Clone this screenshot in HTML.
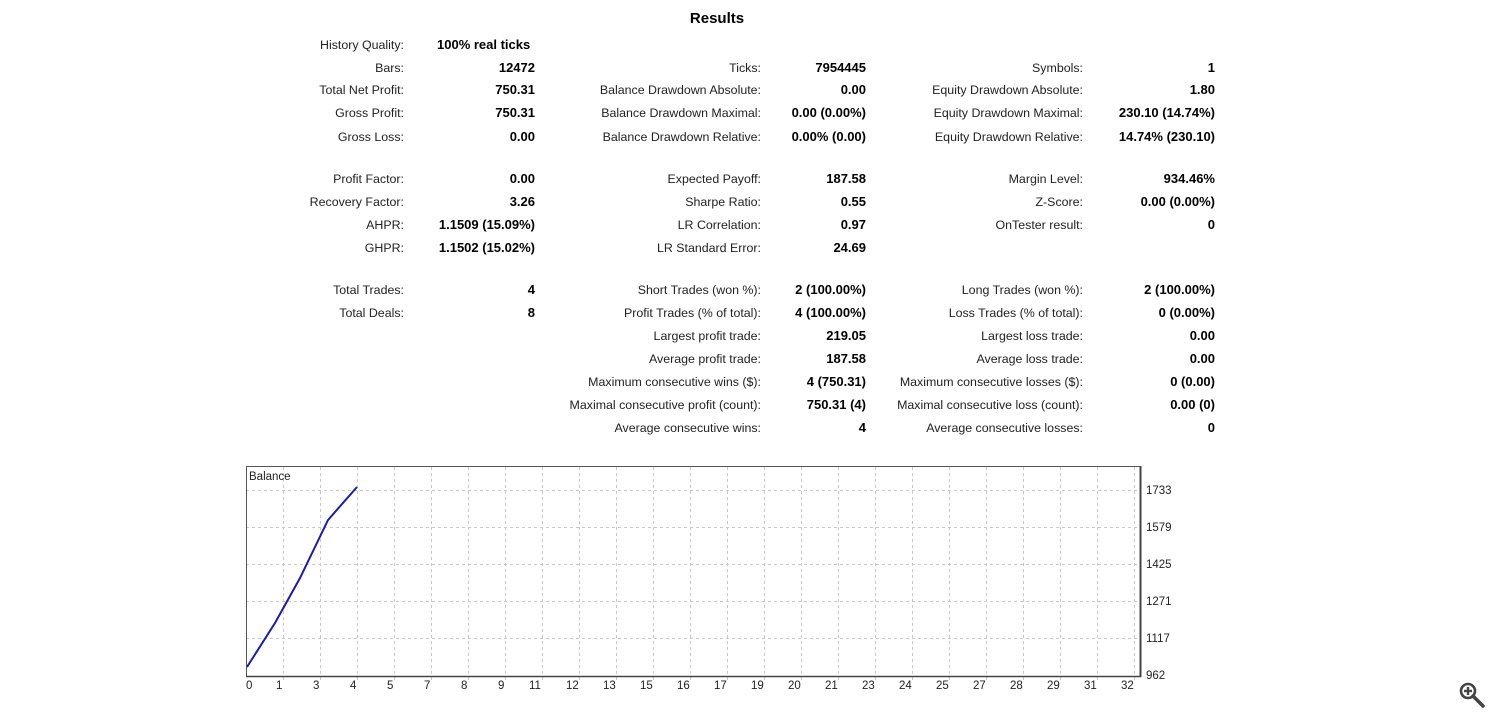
<!DOCTYPE html>
<html><head><meta charset="utf-8"><style>
body{margin:0;width:1500px;height:721px;background:#fff;position:relative;overflow:hidden;font-family:"Liberation Sans",Tahoma,sans-serif;font-size:12.4px;color:#222}
.c{position:absolute;white-space:nowrap;line-height:16px}
.b{font-weight:bold;color:#000;font-size:13px}
.t{position:absolute;left:0;width:1434px;text-align:center;top:10px;font-weight:bold;font-size:15px;color:#000}
.ax{position:absolute;font-size:11.5px;line-height:12px;color:#222}
</style></head><body>
<div class="t">Results</div>
<div class="c" style="right:1096px;top:37px">History Quality:</div><div class="c b" style="left:437px;top:37px">100% real ticks</div>

<div class="c" style="right:1096px;top:60px">Bars:</div><div class="c b" style="right:965px;top:60px">12472</div>
<div class="c" style="right:739px;top:60px">Ticks:</div><div class="c b" style="right:634px;top:60px">7954445</div>
<div class="c" style="right:417px;top:60px">Symbols:</div><div class="c b" style="right:285px;top:60px">1</div>

<div class="c" style="right:1096px;top:82px">Total Net Profit:</div><div class="c b" style="right:965px;top:82px">750.31</div>
<div class="c" style="right:739px;top:82px">Balance Drawdown Absolute:</div><div class="c b" style="right:634px;top:82px">0.00</div>
<div class="c" style="right:417px;top:82px">Equity Drawdown Absolute:</div><div class="c b" style="right:285px;top:82px">1.80</div>

<div class="c" style="right:1096px;top:105px">Gross Profit:</div><div class="c b" style="right:965px;top:105px">750.31</div>
<div class="c" style="right:739px;top:105px">Balance Drawdown Maximal:</div><div class="c b" style="right:634px;top:105px">0.00 (0.00%)</div>
<div class="c" style="right:417px;top:105px">Equity Drawdown Maximal:</div><div class="c b" style="right:285px;top:105px">230.10 (14.74%)</div>

<div class="c" style="right:1096px;top:129px">Gross Loss:</div><div class="c b" style="right:965px;top:129px">0.00</div>
<div class="c" style="right:739px;top:129px">Balance Drawdown Relative:</div><div class="c b" style="right:634px;top:129px">0.00% (0.00)</div>
<div class="c" style="right:417px;top:129px">Equity Drawdown Relative:</div><div class="c b" style="right:285px;top:129px">14.74% (230.10)</div>

<div class="c" style="right:1096px;top:171px">Profit Factor:</div><div class="c b" style="right:965px;top:171px">0.00</div>
<div class="c" style="right:739px;top:171px">Expected Payoff:</div><div class="c b" style="right:634px;top:171px">187.58</div>
<div class="c" style="right:417px;top:171px">Margin Level:</div><div class="c b" style="right:285px;top:171px">934.46%</div>

<div class="c" style="right:1096px;top:194px">Recovery Factor:</div><div class="c b" style="right:965px;top:194px">3.26</div>
<div class="c" style="right:739px;top:194px">Sharpe Ratio:</div><div class="c b" style="right:634px;top:194px">0.55</div>
<div class="c" style="right:417px;top:194px">Z-Score:</div><div class="c b" style="right:285px;top:194px">0.00 (0.00%)</div>

<div class="c" style="right:1096px;top:217px">AHPR:</div><div class="c b" style="right:965px;top:217px">1.1509 (15.09%)</div>
<div class="c" style="right:739px;top:217px">LR Correlation:</div><div class="c b" style="right:634px;top:217px">0.97</div>
<div class="c" style="right:417px;top:217px">OnTester result:</div><div class="c b" style="right:285px;top:217px">0</div>

<div class="c" style="right:1096px;top:240px">GHPR:</div><div class="c b" style="right:965px;top:240px">1.1502 (15.02%)</div>
<div class="c" style="right:739px;top:240px">LR Standard Error:</div><div class="c b" style="right:634px;top:240px">24.69</div>

<div class="c" style="right:1096px;top:282px">Total Trades:</div><div class="c b" style="right:965px;top:282px">4</div>
<div class="c" style="right:739px;top:282px">Short Trades (won %):</div><div class="c b" style="right:634px;top:282px">2 (100.00%)</div>
<div class="c" style="right:417px;top:282px">Long Trades (won %):</div><div class="c b" style="right:285px;top:282px">2 (100.00%)</div>

<div class="c" style="right:1096px;top:305px">Total Deals:</div><div class="c b" style="right:965px;top:305px">8</div>
<div class="c" style="right:739px;top:305px">Profit Trades (% of total):</div><div class="c b" style="right:634px;top:305px">4 (100.00%)</div>
<div class="c" style="right:417px;top:305px">Loss Trades (% of total):</div><div class="c b" style="right:285px;top:305px">0 (0.00%)</div>

<div class="c" style="right:739px;top:328px">Largest profit trade:</div><div class="c b" style="right:634px;top:328px">219.05</div>
<div class="c" style="right:417px;top:328px">Largest loss trade:</div><div class="c b" style="right:285px;top:328px">0.00</div>

<div class="c" style="right:739px;top:351px">Average profit trade:</div><div class="c b" style="right:634px;top:351px">187.58</div>
<div class="c" style="right:417px;top:351px">Average loss trade:</div><div class="c b" style="right:285px;top:351px">0.00</div>

<div class="c" style="right:739px;top:374px">Maximum consecutive wins ($):</div><div class="c b" style="right:634px;top:374px">4 (750.31)</div>
<div class="c" style="right:417px;top:374px">Maximum consecutive losses ($):</div><div class="c b" style="right:285px;top:374px">0 (0.00)</div>

<div class="c" style="right:739px;top:397px">Maximal consecutive profit (count):</div><div class="c b" style="right:634px;top:397px">750.31 (4)</div>
<div class="c" style="right:417px;top:397px">Maximal consecutive loss (count):</div><div class="c b" style="right:285px;top:397px">0.00 (0)</div>

<div class="c" style="right:739px;top:420px">Average consecutive wins:</div><div class="c b" style="right:634px;top:420px">4</div>
<div class="c" style="right:417px;top:420px">Average consecutive losses:</div><div class="c b" style="right:285px;top:420px">0</div>

<svg style="position:absolute;left:0;top:0" width="1500" height="721">
<g stroke="#c8c8c8" stroke-width="1" stroke-dasharray="3,3">
<line x1="246" y1="490.5" x2="1141" y2="490.5"/><line x1="246" y1="527.5" x2="1141" y2="527.5"/><line x1="246" y1="564.5" x2="1141" y2="564.5"/><line x1="246" y1="601.5" x2="1141" y2="601.5"/><line x1="246" y1="638.5" x2="1141" y2="638.5"/>
<line x1="283.5" y1="467" x2="283.5" y2="680"/><line x1="320.5" y1="467" x2="320.5" y2="680"/><line x1="357.5" y1="467" x2="357.5" y2="680"/><line x1="394.5" y1="467" x2="394.5" y2="680"/><line x1="431.5" y1="467" x2="431.5" y2="680"/><line x1="468.5" y1="467" x2="468.5" y2="680"/><line x1="505.5" y1="467" x2="505.5" y2="680"/><line x1="542.5" y1="467" x2="542.5" y2="680"/><line x1="579.5" y1="467" x2="579.5" y2="680"/><line x1="616.5" y1="467" x2="616.5" y2="680"/><line x1="653.5" y1="467" x2="653.5" y2="680"/><line x1="690.5" y1="467" x2="690.5" y2="680"/><line x1="727.5" y1="467" x2="727.5" y2="680"/><line x1="764.5" y1="467" x2="764.5" y2="680"/><line x1="801.5" y1="467" x2="801.5" y2="680"/><line x1="838.5" y1="467" x2="838.5" y2="680"/><line x1="875.5" y1="467" x2="875.5" y2="680"/><line x1="912.5" y1="467" x2="912.5" y2="680"/><line x1="949.5" y1="467" x2="949.5" y2="680"/><line x1="986.5" y1="467" x2="986.5" y2="680"/><line x1="1023.5" y1="467" x2="1023.5" y2="680"/><line x1="1060.5" y1="467" x2="1060.5" y2="680"/><line x1="1097.5" y1="467" x2="1097.5" y2="680"/><line x1="1134.5" y1="467" x2="1134.5" y2="680"/>
</g>
<rect x="246.5" y="466.5" width="894" height="210" fill="none" stroke="#555" stroke-width="1"/>
<line x1="1140.5" y1="466" x2="1140.5" y2="677" stroke="#444" stroke-width="2"/>
<line x1="246" y1="676.5" x2="1141" y2="676.5" stroke="#444" stroke-width="1.5"/>
<polyline points="247,667 275,623 300,578 328,520 357,487" fill="none" stroke="#1a1ab0" stroke-width="2"/>
<g stroke="#444" fill="none"><circle cx="1468" cy="691" r="7" stroke-width="2.6"/><line x1="1473" y1="696" x2="1483" y2="706" stroke-width="3.5" stroke-linecap="round"/><line x1="1464" y1="691" x2="1472" y2="691" stroke-width="2.4"/><line x1="1468" y1="687" x2="1468" y2="695" stroke-width="2.4"/></g>
</svg>
<div class="ax" style="left:249px;top:471px">Balance</div>
<div class="ax" style="left:1146px;top:485px">1733</div>
<div class="ax" style="left:1146px;top:522px">1579</div>
<div class="ax" style="left:1146px;top:559px">1425</div>
<div class="ax" style="left:1146px;top:596px">1271</div>
<div class="ax" style="left:1146px;top:633px">1117</div>
<div class="ax" style="left:1146px;top:670px">962</div>
<div class="ax" style="left:246px;top:680px">0</div>
<div class="ax" style="left:276px;top:680px">1</div>
<div class="ax" style="left:313px;top:680px">3</div>
<div class="ax" style="left:350px;top:680px">4</div>
<div class="ax" style="left:387px;top:680px">5</div>
<div class="ax" style="left:424px;top:680px">7</div>
<div class="ax" style="left:461px;top:680px">8</div>
<div class="ax" style="left:498px;top:680px">9</div>
<div class="ax" style="left:529px;top:680px">11</div>
<div class="ax" style="left:566px;top:680px">12</div>
<div class="ax" style="left:603px;top:680px">13</div>
<div class="ax" style="left:640px;top:680px">15</div>
<div class="ax" style="left:677px;top:680px">16</div>
<div class="ax" style="left:714px;top:680px">17</div>
<div class="ax" style="left:751px;top:680px">19</div>
<div class="ax" style="left:788px;top:680px">20</div>
<div class="ax" style="left:825px;top:680px">21</div>
<div class="ax" style="left:862px;top:680px">23</div>
<div class="ax" style="left:899px;top:680px">24</div>
<div class="ax" style="left:936px;top:680px">25</div>
<div class="ax" style="left:973px;top:680px">27</div>
<div class="ax" style="left:1010px;top:680px">28</div>
<div class="ax" style="left:1047px;top:680px">29</div>
<div class="ax" style="left:1084px;top:680px">31</div>
<div class="ax" style="left:1121px;top:680px">32</div>
</body></html>
